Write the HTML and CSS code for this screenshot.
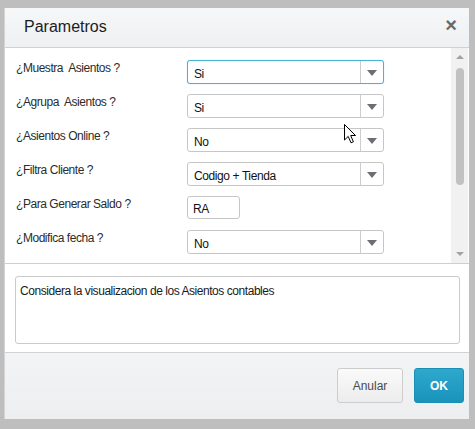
FILE: index.html
```html
<!DOCTYPE html>
<html lang="es">
<head>
    <meta charset="UTF-8">
    <title>Parametros</title>
    <link rel="stylesheet" href="styles.css">
</head>
<body>

    <div class="dialog">
        <div class="dialog-header">
            <h2>Parametros</h2>
            <span class="close-btn">&times;</span>
        </div>

        <div class="params-panel">
            <div class="params-list">
                <div class="param-row">
                    <label>¿Muestra&nbsp; Asientos ?</label>
                    <div class="combo focused"><span class="combo-value">Si</span><span class="combo-arrow"></span></div>
                </div>
                <div class="param-row">
                    <label>¿Agrupa&nbsp; Asientos ?</label>
                    <div class="combo"><span class="combo-value">Si</span><span class="combo-arrow"></span></div>
                </div>
                <div class="param-row">
                    <label>¿Asientos Online ?</label>
                    <div class="combo"><span class="combo-value">No</span><span class="combo-arrow"></span></div>
                </div>
                <div class="param-row">
                    <label>¿Filtra Cliente ?</label>
                    <div class="combo"><span class="combo-value">Codigo + Tienda</span><span class="combo-arrow"></span></div>
                </div>
                <div class="param-row">
                    <label>¿Para Generar Saldo ?</label>
                    <div class="text-field">RA</div>
                </div>
                <div class="param-row">
                    <label>¿Modifica fecha ?</label>
                    <div class="combo"><span class="combo-value">No</span><span class="combo-arrow"></span></div>
                </div>
            </div>

            <div class="scrollbar">
                <span class="scroll-up"></span>
                <span class="scroll-thumb"></span>
                <span class="scroll-down"></span>
            </div>

            <!-- mouse pointer -->
            <svg class="pointer" width="13" height="20" viewBox="0 0 13 20">
                <path d="M0.5 0.5 L0.5 16 L4.2 12.4 L7 18.8 L9.4 17.8 L6.7 11.5 L11.5 11.5 Z" fill="#fff" stroke="#000" stroke-width="1"/>
            </svg>
        </div>

        <div class="desc-panel">
            <div class="desc-box">Considera la visualizacion de los Asientos contables</div>
        </div>

        <div class="dialog-footer">
            <button class="btn btn-cancel">Anular</button>
            <button class="btn btn-ok">OK</button>
        </div>
    </div>

</body>
</html>
```

FILE: styles.css
```css
* {
    box-sizing: border-box;
    margin: 0;
    padding: 0;
    font-family: "Liberation Sans", Arial, sans-serif;
}

body {
    background: #bebebe;
    width: 475px;
    height: 429px;
    overflow: hidden;
}

.dialog {
    margin: 8px 0 0 4px;
    width: 465px;
    height: 411px;
    background: white;
    border-left: 1px solid #d4d4d4;
    display: flex;
    flex-direction: column;
}

.dialog-header {
    height: 40px;
    flex-shrink: 0;
    background: linear-gradient(#f6f7f8, #eef0f1);
    border-bottom: 1px solid #cfd2d4;
    display: flex;
    align-items: center;
    justify-content: space-between;
    padding: 0 12px 1px 19px;
}

.dialog-header h2 {
    font-size: 16px;
    font-weight: normal;
    color: #1c1c1c;
}

.close-btn {
    font-size: 20px;
    font-weight: bold;
    color: #666a6e;
    line-height: 1;
    margin-top: -4px;
}

.params-panel {
    position: relative;
    height: 216px;
    flex-shrink: 0;
    display: flex;
    border-bottom: 1px solid #cfcfcf;
}

.params-list {
    flex: 1;
    padding: 12px 0 0 11px;
    display: flex;
    flex-direction: column;
    gap: 10px;
}

.param-row {
    display: flex;
    height: 24px;
}

.param-row label {
    width: 171px;
    font-size: 12px;
    letter-spacing: -0.45px;
    color: #2b2b2b;
    padding-top: 1px;
    white-space: nowrap;
}

.combo {
    width: 197px;
    height: 24px;
    border: 1px solid #c6c6c6;
    border-radius: 3px;
    display: flex;
    align-items: center;
    background: white;
}

.combo.focused {
    border-color: #45b4d8;
    box-shadow: 0 0 1px rgba(69, 180, 216, 0.6);
}

.combo-value {
    flex: 1;
    padding: 3px 0 0 6px;
    font-size: 12px;
    letter-spacing: -0.4px;
    color: #111;
}

.combo-arrow {
    width: 23px;
    height: 100%;
    border-left: 1px solid #cdcdcd;
    display: flex;
    align-items: center;
    justify-content: center;
}

.combo-arrow::after {
    content: "";
    border-left: 5px solid transparent;
    border-right: 5px solid transparent;
    border-top: 6px solid #6b6f73;
    margin-top: 1px;
}

.text-field {
    width: 53px;
    height: 23px;
    border: 1px solid #c6c6c6;
    border-radius: 3px;
    font-size: 12px;
    letter-spacing: -0.4px;
    color: #111;
    padding: 5px 0 0 5px;
}

.scrollbar {
    width: 17px;
    margin-right: 1px;
    background: #f1f1f1;
    display: flex;
    flex-direction: column;
    align-items: center;
    padding-top: 7px;
}

.scroll-up,
.scroll-down {
    border-left: 4px solid transparent;
    border-right: 4px solid transparent;
}

.scroll-up {
    border-bottom: 4px solid #a3a3a3;
}

.scroll-down {
    border-top: 4px solid #a3a3a3;
    margin-top: auto;
    margin-bottom: 7px;
}

.scroll-thumb {
    width: 8px;
    height: 117px;
    margin-top: 9px;
    border-radius: 4px;
    background: #c1c1c1;
}

.pointer {
    position: absolute;
    left: 339px;
    top: 76px;
}

.desc-panel {
    height: 89px;
    flex-shrink: 0;
    padding: 12px 10px 0 10px;
    border-bottom: 1px solid #d2d2d2;
}

.desc-box {
    width: 445px;
    height: 68px;
    border: 1px solid #cacaca;
    border-radius: 3px;
    font-size: 12px;
    letter-spacing: -0.45px;
    color: #1a1a1a;
    padding: 7px 0 0 4px;
}

.dialog-footer {
    flex: 1;
    background: linear-gradient(#f3f4f5, #eceef0);
    display: flex;
    justify-content: flex-end;
    align-items: flex-start;
    gap: 11px;
    padding: 15px 5px 0 0;
}

.btn {
    height: 35px;
    border-radius: 3px;
    font-size: 12px;
    cursor: pointer;
}

.btn-cancel {
    width: 66px;
    background: linear-gradient(#fafafa, #ececec);
    border: 1px solid #cdcdcd;
    color: #4a4a4a;
}

.btn-ok {
    width: 50px;
    background: linear-gradient(#2ea8cd, #1993ba);
    border: 1px solid #1a8fb5;
    color: white;
    font-weight: bold;
}
```
